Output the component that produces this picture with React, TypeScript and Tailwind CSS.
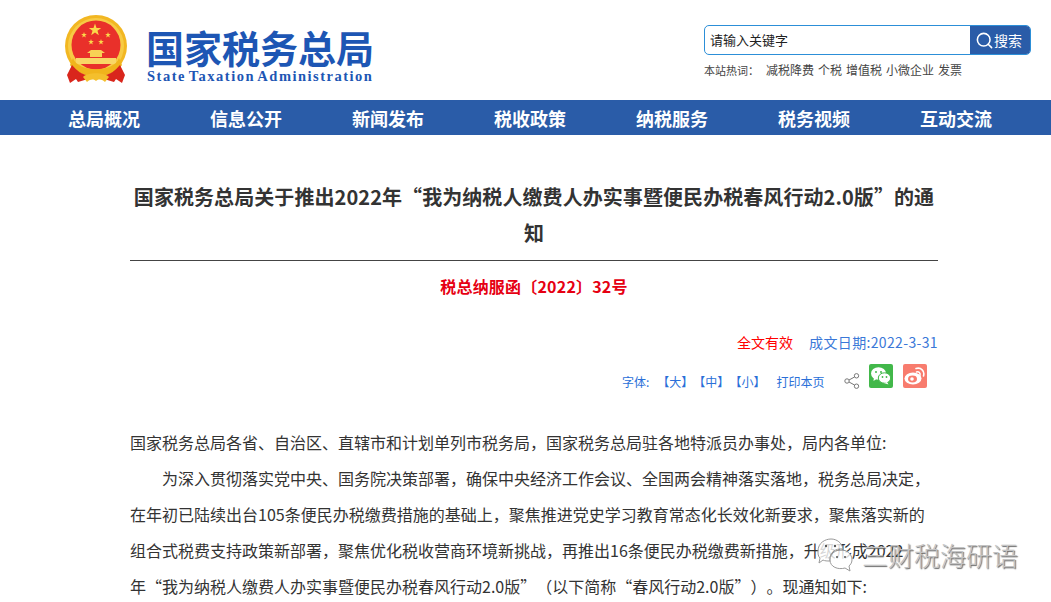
import { Search } from 'lucide-react';

const cjk = '[font-family:"Noto_Sans_CJK_SC","Liberation_Sans",sans-serif]';
const navItems = ['总局概况', '信息公开', '新闻发布', '税收政策', '纳税服务', '税务视频', '互动交流'];
const hotWords = ['减税降费', '个税', '增值税', '小微企业', '发票'];

function Star({ x, y, r }: { x: number; y: number; r: number }) {
  const pts = Array.from({ length: 10 }, (_, i) => {
    const a = (Math.PI / 5) * i - Math.PI / 2;
    const d = i % 2 === 0 ? r : r * 0.4;
    return `${(x + d * Math.cos(a)).toFixed(2)},${(y + d * Math.sin(a)).toFixed(2)}`;
  }).join(' ');
  return <polygon points={pts} fill="#fbd84a" />;
}

function Emblem() {
  return (
    <svg width="66" height="70" viewBox="0 0 66 70" className="shrink-0">
      <circle cx="32" cy="31" r="31" fill="#f2b722" />
      <circle cx="32" cy="31" r="28" fill="#f7cb45" />
      <circle cx="32" cy="30" r="24.5" fill="#e9302a" />
      <Star x={31} y={15} r={6.5} />
      <Star x={20} y={20} r={3} />
      <Star x={44} y={20} r={3} />
      <Star x={27} y={27} r={3} />
      <Star x={37} y={27} r={3} />
      <path d="M23 38 L27 35 H37 L41 38 H38 V42 H26 V38 Z" fill="#f8d255" />
      <path d="M12 43 H52 V49 H12 Z" fill="#f9d766" />
      <path d="M9 43 C14 58 50 58 55 43 L58 50 C50 64 14 64 6 50 Z" fill="#f0b41c" />
      <path d="M8 50 C13 56 18 59 22 60 L24 64 L14 67 L12 64 L6 68 L3 60 Z" fill="#d9261c" />
      <path d="M56 50 C51 56 46 59 42 60 L40 64 L50 67 L52 64 L58 68 L61 60 Z" fill="#d9261c" />
      <path d="M19 62 C24 57 40 57 45 62 L41 67 C37 64 35 64 32 66 C29 64 27 64 23 67 Z" fill="#f4bf2c" />
    </svg>
  );
}

function WechatIcon() {
  return (
    <svg width="20" height="18" viewBox="0 0 20 18" fill="white">
      <ellipse cx="7.5" cy="6.5" rx="7.5" ry="6.2" />
      <path d="M3 10 L2.5 14 L7 11 Z" />
      <ellipse cx="13.5" cy="11" rx="6.2" ry="5.2" fill="white" stroke="#42b84a" strokeWidth="1" />
      <path d="M16 15 L17.5 17.5 L13 16 Z" />
      <circle cx="5" cy="5" r="1" fill="#42b84a" />
      <circle cx="10" cy="5" r="1" fill="#42b84a" />
      <circle cx="11.5" cy="10" r="0.9" fill="#42b84a" />
      <circle cx="15.5" cy="10" r="0.9" fill="#42b84a" />
    </svg>
  );
}

function WeiboIcon() {
  return (
    <svg width="22" height="18" viewBox="0 0 22 18" fill="white">
      <ellipse cx="9" cy="11.5" rx="8.5" ry="6" />
      <ellipse cx="8.5" cy="12" rx="4.5" ry="3.4" fill="#f87c6e" />
      <circle cx="8" cy="12" r="1.8" />
      <path d="M12 1.5 C17 0 21 4 19.5 9" fill="none" stroke="white" strokeWidth="1.6" strokeLinecap="round" />
      <path d="M12.5 5 C15 4.4 16.6 6 16 8.4" fill="none" stroke="white" strokeWidth="1.5" strokeLinecap="round" />
    </svg>
  );
}

function ShareIcon() {
  return (
    <svg width="16" height="16" viewBox="0 0 16 16" fill="none" stroke="#777" strokeWidth="1">
      <circle cx="3" cy="8" r="2.2" />
      <circle cx="12.5" cy="2.8" r="2.2" />
      <circle cx="12.5" cy="13.2" r="2.2" />
      <path d="M5 7 L10.5 4 M5 9 L10.5 12" />
    </svg>
  );
}

function WatermarkBubbles() {
  return (
    <svg width="38" height="36" viewBox="0 0 38 36" fill="none" stroke="#9a9a9a" strokeWidth="1">
      <path d="M3 14 C3 6 10 2 16 2 C22 2 27 6 28 12 C20 11 14 16 15 24 C12 24 10 24 8 23 L4 26 L5 21 C3 19 3 17 3 14 Z" fill="#ffffffcc" />
      <path d="M15 23 C15 16 21 13 26 13 C32 13 37 17 37 23 C37 26 35 28 34 29 L35 34 L30 31 C23 33 15 30 15 23 Z" fill="#ffffffcc" />
      <circle cx="11" cy="9" r="1.2" fill="#555" stroke="none" />
      <circle cx="20" cy="9" r="1.2" fill="#555" stroke="none" />
      <circle cx="22" cy="20" r="1" fill="#555" stroke="none" />
      <circle cx="30" cy="20" r="1" fill="#555" stroke="none" />
    </svg>
  );
}

export default function App() {
  return (
    <div className={`relative h-[602px] w-[1051px] overflow-hidden bg-white [text-spacing-trim:space-all] ${cjk}`}>
      {/* ---- header ---- */}
      <header className="flex h-[100px]">
        <div className="ml-[64px] mt-[15px] flex">
          <Emblem />
          <div className="ml-[16px] mt-[11px] w-[228px]">
            <div className="text-[38px] font-bold leading-[42px] whitespace-nowrap text-[#1d56b4]">国家税务总局</div>
            <div className="ml-[1px] text-[14.5px] font-bold leading-[16px] tracking-[1.5px] [word-spacing:-2px] whitespace-nowrap text-[#1d56b4] [font-family:'Liberation_Serif',serif]">
              State Taxation Administration
            </div>
          </div>
        </div>
        <div className="ml-[330px] mt-[25px] w-[327px]">
          <div className="flex h-[30px] overflow-hidden rounded-[5px] border border-[#2c8fd8]">
            <div className="flex-1 pl-[5px] text-[13px] leading-[28px] text-[#222]">请输入关键字</div>
            <div className="flex w-[60px] items-center bg-[#2a5ca8] pl-[5px] text-[13px] text-white">
              <Search size={19} strokeWidth={2} />
              <span className="text-[14px]">搜索</span>
            </div>
          </div>
          <div className="mt-[6px] flex text-[12px] leading-[18px] text-[#444]">
            <span className="mr-[7px] text-[11px]">本站热词：</span>
            <span className="flex gap-[4px]">
              {hotWords.map((w) => (
                <span key={w}>{w}</span>
              ))}
            </span>
          </div>
        </div>
      </header>

      {/* ---- nav ---- */}
      <nav className="flex h-[35px] bg-[#2a5ca8] pl-[33px]">
        {navItems.map((item) => (
          <div key={item} className="w-[142px] text-center text-[18px] font-bold leading-[37px] text-white">
            {item}
          </div>
        ))}
      </nav>

      {/* ---- article ---- */}
      <main className="ml-[130px] w-[808px]">
        <h1 className="mt-[44px] text-center text-[20px] font-bold leading-[36px] tracking-[0.07px] text-[#333]">
          国家税务总局关于推出2022年“我为纳税人缴费人办实事暨便民办税春风行动2.0版”的通知
        </h1>
        <div className="mt-[9px] border-b border-[#444]" />
        <div className="mt-[10px] text-center text-[16px] font-bold leading-[30px] tracking-[0.2px] text-[#e60012]">税总纳服函〔2022〕32号</div>
        <div className="mt-[31px] flex justify-end text-[14px] leading-[20px]">
          <span className="mr-[16px] text-[#f00]">全文有效</span>
          <span className="tracking-[0.35px] text-[#3a78d8]">成文日期:2022-3-31</span>
        </div>
        <div className="mt-[17px] flex h-[26px] items-center text-[12px] text-[#2a6fd8]">
          <span className="ml-[492px]">字体:</span>
          <span className="ml-[8px]">【大】</span>
          <span>【中】</span>
          <span>【小】</span>
          <span className="ml-[11px]">打印本页</span>
          <span className="mb-[2px] ml-[20px]">
            <ShareIcon />
          </span>
          <span className="mb-[12px] ml-[9px] flex h-[24px] w-[24px] items-center justify-center rounded-[2px] bg-[#42b84a]">
            <WechatIcon />
          </span>
          <span className="mb-[12px] ml-[10px] flex h-[24px] w-[24px] items-center justify-center rounded-[2px] bg-[#f87c6e]">
            <WeiboIcon />
          </span>
        </div>
        <div className="mt-[29px] text-[16px] leading-[36px] text-[#333]">
          <p>国家税务总局各省、自治区、直辖市和计划单列市税务局，国家税务总局驻各地特派员办事处，局内各单位:</p>
          <p className="indent-[32px]">
            为深入贯彻落实党中央、国务院决策部署，确保中央经济工作会议、全国两会精神落实落地，税务总局决定，在年初已陆续出台105条便民办税缴费措施的基础上，聚焦推进党史学习教育常态化长效化新要求，聚焦落实新的组合式税费支持政策新部署，聚焦优化税收营商环境新挑战，再推出16条便民办税缴费新措施，升级形成2022年“我为纳税人缴费人办实事暨便民办税春风行动2.0版”（以下简称“春风行动2.0版”）。现通知如下:
          </p>
        </div>
      </main>

      {/* ---- watermark ---- */}
      <div className="absolute left-[815px] top-[537px] flex items-start">
        <WatermarkBubbles />
        <span className="ml-[9px] text-[26px] font-light leading-[36px] whitespace-nowrap text-[#c4c4c4] [text-shadow:1px_1px_1px_#666]">三财税海研语</span>
      </div>
    </div>
  );
}
